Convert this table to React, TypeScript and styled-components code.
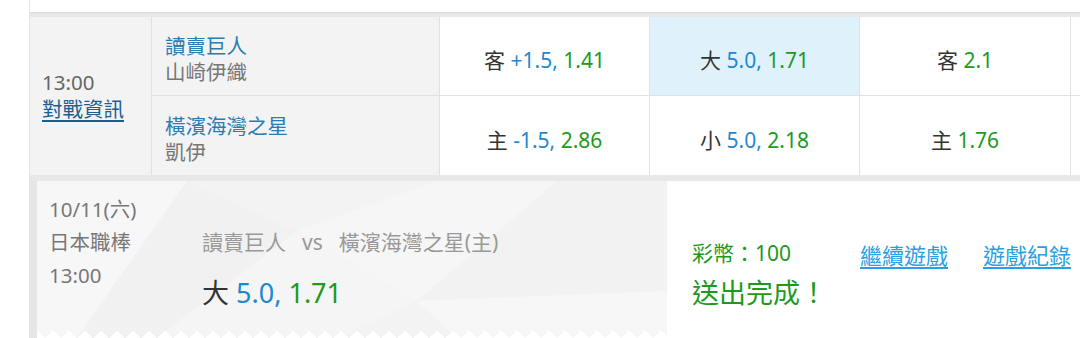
import styled, { createGlobalStyle } from 'styled-components';

const GlobalStyle = createGlobalStyle`
  body {
    margin: 0;
    background: #fff;
    font-family: "Noto Sans", "Noto Sans CJK TC", sans-serif;
    font-size: 20px;
  }
`

const BLUE = '#1f88cf'
const GREEN = '#1c9a1c'

type Odd = { label: string; line?: string; price: string; active?: boolean }

const games = [
  {
    team: '讀賣巨人',
    pitcher: '山崎伊織',
    odds: [
      { label: '客', line: '+1.5,', price: '1.41' },
      { label: '大', line: '5.0,', price: '1.71', active: true },
      { label: '客', price: '2.1' },
    ] as Odd[],
  },
  {
    team: '橫濱海灣之星',
    pitcher: '凱伊',
    odds: [
      { label: '主', line: '-1.5,', price: '2.86' },
      { label: '小', line: '5.0,', price: '2.18' },
      { label: '主', price: '1.76' },
    ] as Odd[],
  },
]

const OddText = ({ label, line, price }: Odd) => (
  <span>
    {label} {line && <Line>{line}</Line>} <Price>{price}</Price>
  </span>
)

const App = () => {
  return (
    <>
      <GlobalStyle />
      <Page>
        <Band />
        <Table>
          <TimeCell>
            <span>13:00</span>
            <InfoLink href="#">對戰資訊</InfoLink>
          </TimeCell>
          {games.map((g, row) => (
            <>
              <TeamCell key={g.team} last={row === 1}>
                <TeamName>{g.team}</TeamName>
                <Pitcher>{g.pitcher}</Pitcher>
              </TeamCell>
              {g.odds.map((o, i) => (
                <OddCell key={i} active={!!o.active} last={row === 1}>
                  <OddText {...o} />
                </OddCell>
              ))}
              <Filler last={row === 1} />
            </>
          ))}
        </Table>
        <Band thick />
        <Lower>
          <Ticket>
            <Texture viewBox="0 0 630 157" preserveAspectRatio="none">
              <polygon points="0,0 150,0 40,157 0,157" fill="#f7f7f7" />
              <polygon points="150,0 260,50 120,157 40,157" fill="#f1f1f1" />
              <polygon points="260,50 400,0 520,0 380,120" fill="#f6f6f6" />
              <polygon points="380,120 520,0 630,0 630,110" fill="#f2f2f2" />
              <polygon points="380,120 630,110 630,157 420,157" fill="#f7f7f7" />
              <polygon points="120,157 260,50 380,120 300,157" fill="#f5f5f5" />
            </Texture>
            <TicketInfo>
              <span>10/11(六)</span>
              <span>日本職棒</span>
              <span>13:00</span>
            </TicketInfo>
            <TicketBet>
              <Matchup>
                讀賣巨人<Vs>vs</Vs>橫濱海灣之星(主)
              </Matchup>
              <BetLine>
                大 <Line>5.0,</Line> <Price>1.71</Price>
              </BetLine>
            </TicketBet>
          </Ticket>
          <Result>
            <Status>
              <Coins>彩幣：100</Coins>
              <Done>送出完成！</Done>
            </Status>
            <Links>
              <NextLink href="#">繼續遊戲</NextLink>
              <NextLink href="#">遊戲紀錄</NextLink>
            </Links>
          </Result>
        </Lower>
      </Page>
    </>
  )
}

type rowProps = { last?: boolean }

const Page = styled.div`
  margin-left: 29px;
  padding-top: 12px;
  border-left: 1px solid #e3e3e3;
  height: 326px;
  overflow: hidden;
`

const Band = styled.div<{ thick?: boolean }>`
  height: ${p => (p.thick ? '6px' : '4px')};
  background: #e8e8e8;
  border-top: ${p => (p.thick ? 'none' : '1px solid #dcdcdc')};
`

const Table = styled.div`
  display: grid;
  grid-template-columns: 122px 288px 210px 210px 211px 1fr;
  grid-template-rows: 79px 79px;
  background: #fff;
`

const TimeCell = styled.div`
  grid-row: span 2;
  background: #f3f3f3;
  border-right: 1px solid #e1e1e1;
  display: flex;
  flex-direction: column;
  justify-content: center;
  padding-left: 12px;
  line-height: 27px;
  color: #666;
  font-size: 20.5px;
`

const InfoLink = styled.a`
  color: #1b5f92;
  text-decoration: underline;
  text-underline-offset: 3px;
`

const TeamCell = styled.div<rowProps>`
  background: #f3f3f3;
  border-right: 1px solid #e1e1e1;
  border-bottom: ${p => (p.last ? 'none' : '1px solid #e1e1e1')};
  display: flex;
  flex-direction: column;
  justify-content: center;
  padding: 6px 0 0 13px;
  line-height: 26px;
  font-size: 20.5px;
`

const TeamName = styled.span`
  color: #2b7cb3;
`

const Pitcher = styled.span`
  color: #777;
`

const OddCell = styled.div<rowProps & { active: boolean }>`
  background: ${p => (p.active ? '#dff2fc' : '#fff')};
  border-right: 1px solid #e1e1e1;
  border-bottom: ${p => (p.last ? 'none' : '1px solid #e1e1e1')};
  display: flex;
  align-items: center;
  justify-content: center;
  padding-top: 6px;
  color: #333;
  font-size: 21px;
`

const Filler = styled.div<rowProps>`
  background: #fff;
  border-bottom: ${p => (p.last ? 'none' : '1px solid #e1e1e1')};
`

const Line = styled.span`
  color: ${BLUE};
`

const Price = styled.span`
  color: ${GREEN};
`

const Lower = styled.div`
  display: flex;
  height: 157px;
  border-left: 7px solid #e6e6e6;
`

const Ticket = styled.div`
  position: relative;
  width: 630px;
  background: #f3f3f3;
  display: flex;
  padding: 12px 0 0 12px;
  box-sizing: border-box;
  &::after {
    content: '';
    position: absolute;
    left: 0;
    right: 0;
    bottom: 0;
    height: 8px;
    background: linear-gradient(-45deg, #fff 5px, transparent 0),
      linear-gradient(45deg, #fff 5px, transparent 0);
    background-size: 16px 8px;
    background-position: left bottom;
    background-repeat: repeat-x;
  }
`

const Texture = styled.svg`
  position: absolute;
  inset: 0;
  width: 100%;
  height: 100%;
`

const TicketInfo = styled.div`
  position: relative;
  display: flex;
  flex-direction: column;
  width: 153px;
  line-height: 33px;
  color: #777;
  font-size: 20.5px;
`

const TicketBet = styled.div`
  position: relative;
  display: flex;
  flex-direction: column;
  padding-top: 34px;
`

const Matchup = styled.span`
  color: #999;
  line-height: 30px;
  font-size: 21px;
`

const Vs = styled.span`
  margin: 0 16px;
`

const BetLine = styled.span`
  margin-top: 20px;
  font-size: 27px;
  line-height: 32px;
  color: #333;
`

const Result = styled.div`
  flex: 1;
  display: flex;
  align-items: flex-start;
  padding: 58px 0 0 25px;
  background: #fff;
`

const Status = styled.div`
  display: flex;
  flex-direction: column;
  width: 168px;
  color: ${GREEN};
`

const Coins = styled.span`
  line-height: 28px;
  font-size: 21px;
`

const Done = styled.span`
  margin-top: 10px;
  font-size: 27px;
  line-height: 32px;
`

const Links = styled.div`
  display: flex;
  gap: 35px;
  padding-top: 2px;
`

const NextLink = styled.a`
  color: #2a9fe3;
  text-decoration: underline;
  text-underline-offset: 3px;
  line-height: 28px;
  font-size: 22px;
`

export default App
